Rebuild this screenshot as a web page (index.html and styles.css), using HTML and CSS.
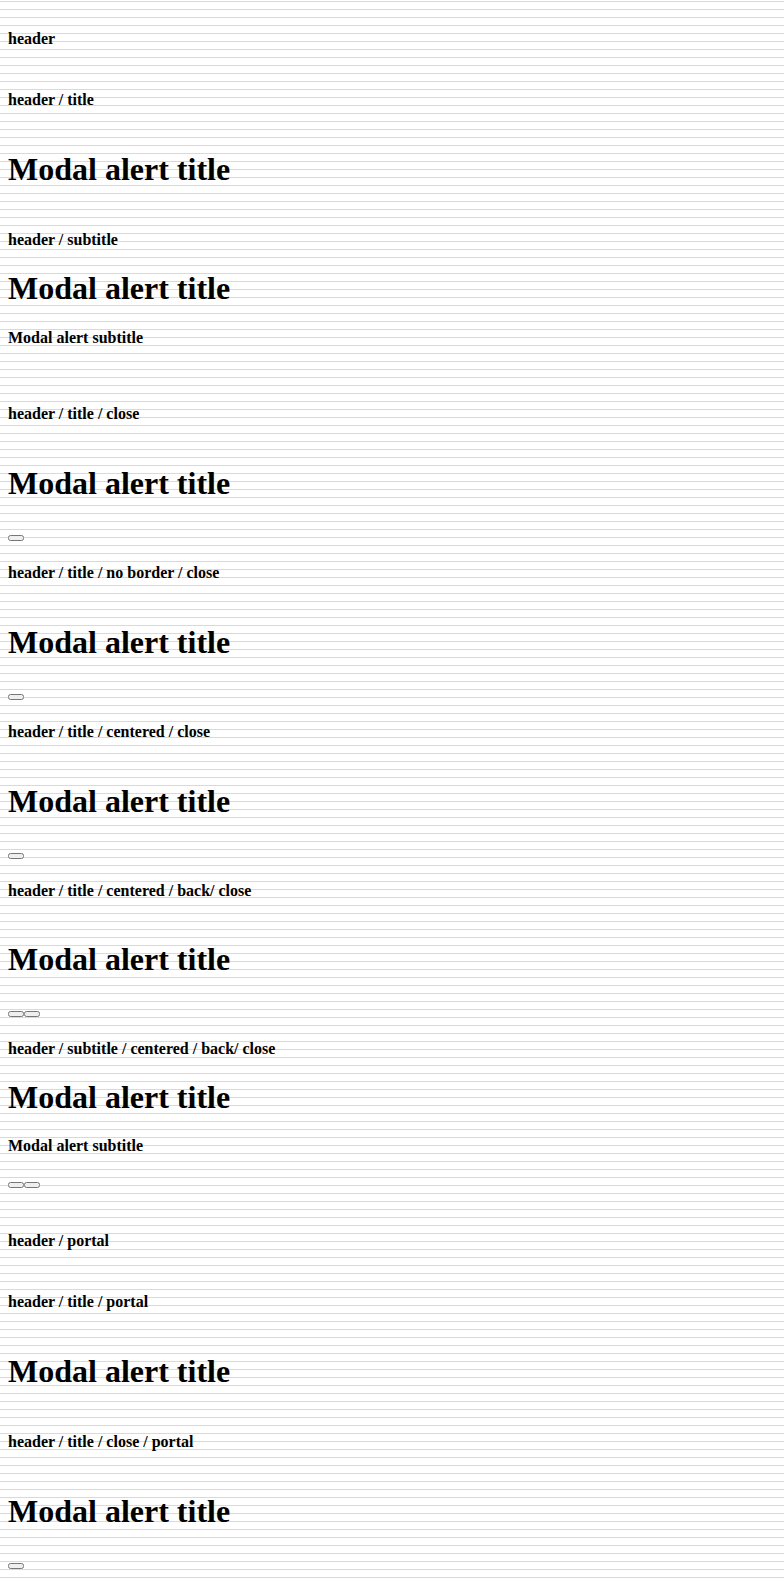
FILE: index.html
```html
<!DOCTYPE html>
<html lang="en">
<head>
<meta charset="utf-8">
<title>Modal header</title>
<link rel="stylesheet" href="styles.css">
</head>
<body>
<div class="page">
  <h4 class="story">header</h4>
  <header class="modal-header"></header>

  <h4 class="story">header / title</h4>
  <header class="modal-header"><h1 class="title">Modal alert title</h1></header>

  <h4 class="story">header / subtitle</h4>
  <header class="modal-header-sub">
    <h1 class="title">Modal alert title</h1>
    <h4 class="subtitle">Modal alert subtitle</h4>
  </header>

  <h4 class="story">header / title / close</h4>
  <header class="modal-header">
    <h1 class="title">Modal alert title</h1>
    <div class="actions"><button type="button"></button></div>
  </header>

  <h4 class="story">header / title / no border / close</h4>
  <header class="modal-header">
    <h1 class="title">Modal alert title</h1>
    <div class="actions"><button type="button"></button></div>
  </header>

  <h4 class="story">header / title / centered / close</h4>
  <header class="modal-header">
    <h1 class="title">Modal alert title</h1>
    <div class="actions"><button type="button"></button></div>
  </header>

  <h4 class="story">header / title / centered / back/ close</h4>
  <header class="modal-header">
    <h1 class="title">Modal alert title</h1>
    <div class="actions"><button type="button"></button><button type="button"></button></div>
  </header>

  <h4 class="story">header / subtitle / centered / back/ close</h4>
  <header class="modal-header-sub with-actions">
    <h1 class="title">Modal alert title</h1>
    <h4 class="subtitle">Modal alert subtitle</h4>
    <div class="actions-sub"><button type="button"></button><button type="button"></button></div>
  </header>

  <h4 class="story">header / portal</h4>
  <header class="modal-header"></header>

  <h4 class="story">header / title / portal</h4>
  <header class="modal-header"><h1 class="title">Modal alert title</h1></header>

  <h4 class="story">header / title / close / portal</h4>
  <header class="modal-header">
    <h1 class="title">Modal alert title</h1>
    <div class="actions"><button type="button"></button></div>
  </header>
</div>
</body>
</html>
```

FILE: styles.css
```css
html {
  background-color: #ffffff;
  background-image: linear-gradient(to bottom, transparent 1px, #80ffff 1px, #80ffff 2px, transparent 2px);
  background-size: 100% 8px;
}

body {
  margin: 8px;
  font-family: "Liberation Serif", "Times New Roman", serif;
  color: #000000;
}

.page {
  display: flow-root;
}

.story {
  font-size: 1em;
  font-weight: bold;
  margin: 22.08px 0 20.48px;
}

.title {
  font-size: 2em;
  font-weight: bold;
  margin: 0.67em 0;
}

.subtitle {
  font-size: 1em;
  font-weight: bold;
  margin: 1.33em 0;
}

.modal-header {
  display: flow-root;
}

.modal-header-sub {
  display: block;
  padding-bottom: 14.92px;
}

.modal-header-sub.with-actions {
  padding-bottom: 0;
}

.modal-header-sub.with-actions .title {
  margin-top: 20.48px;
}

.actions {
  display: flex;
  align-items: flex-start;
  padding-top: 11.5px;
  padding-bottom: 0.86px;
}

.actions-sub {
  display: flex;
  align-items: flex-start;
  padding-top: 6px;
  padding-bottom: 21.8px;
}
```
